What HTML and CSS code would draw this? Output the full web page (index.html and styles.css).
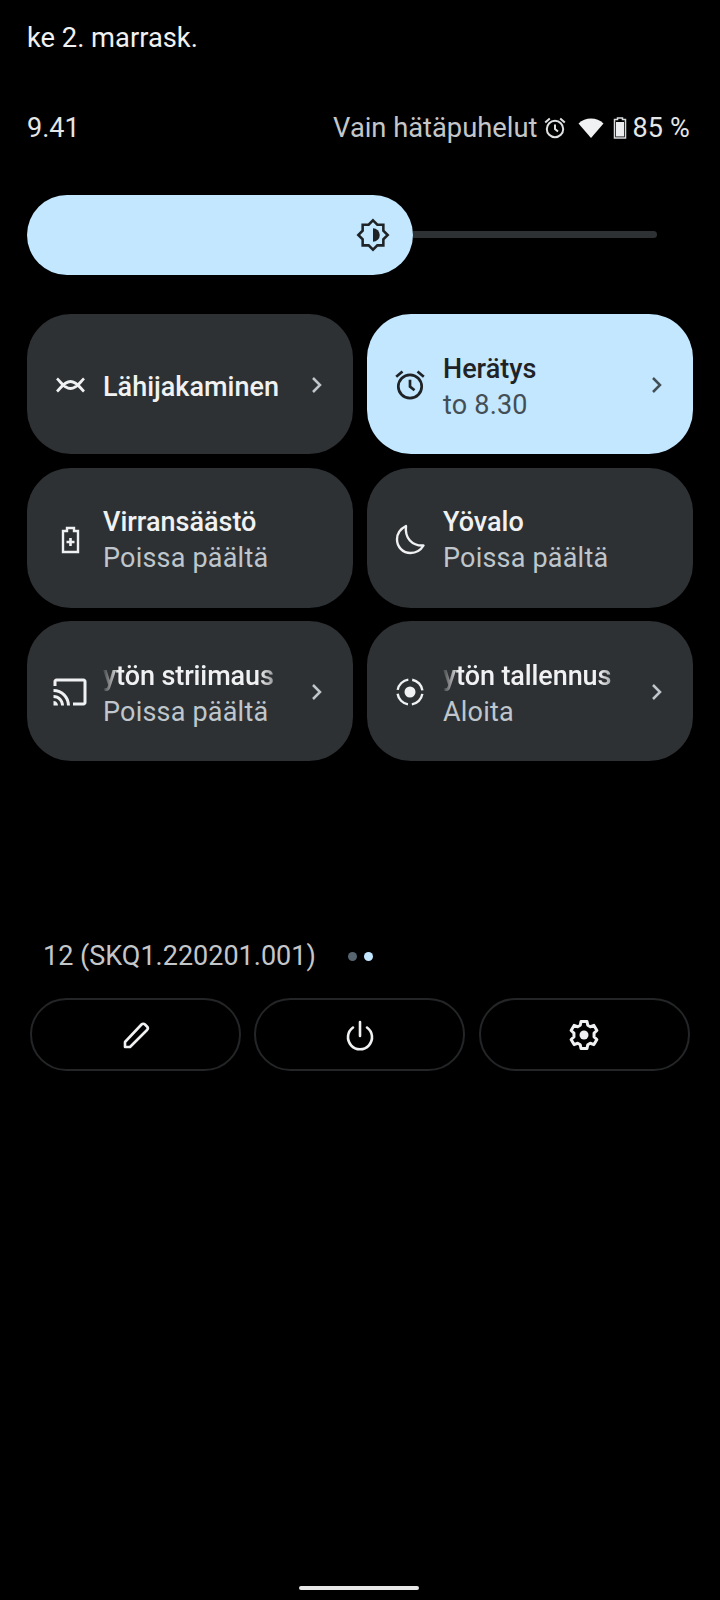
FILE: index.html
```html
<!DOCTYPE html>
<html>
	<head>
		<meta charset="utf-8">
		<title>Pika-asetukset</title>
		<link rel="stylesheet" href="styles.css">
	</head>
	<body>
		<div class="date">ke 2. marrask.</div>

		<div class="status">
			<span class="time">9.41</span>
			<div class="status-right">
				<span class="carrier">Vain hätäpuhelut</span>
				<svg class="st-alarm" width="24" height="24" viewBox="0 0 24 24" fill="none" stroke="#dfe1e3" stroke-width="2"><circle cx="12" cy="13" r="8.200"/><path d="M12 8.500V13l3 2.500M2.200 6.500L6.800 2.500M21.800 6.500L17.200 2.500"/></svg>
				<svg class="st-wifi" width="26" height="20" viewBox="0 0 26 20"><path d="M13 20L.5 5.500C4 2.200 8.200.5 13 .5s9 1.700 12.500 5z" fill="#f0f1f2"/></svg>
				<svg class="st-batt" width="14" height="22" viewBox="0 0 14 22"><path d="M4.500 1v1.500H1.500v18.500h11V2.500H9.500V1z" fill="none" stroke="#d8dadc" stroke-width="1.500"/><rect x="3" y="5" width="8" height="14.500" fill="#eceef0"/></svg>
				<span class="batt">85 %</span>
			</div>
		</div>

		<div class="slider">
			<div class="thumb">
				<svg width="36" height="36" viewBox="0 0 24 24"><path d="M12 2.200l2.900 2.900h4v4L21.800 12l-2.900 2.900v4h-4L12 21.800l-2.900-2.900h-4v-4L2.200 12l2.900-2.900v-4h4z" fill="none" stroke="#1f2326" stroke-width="1.700"/><path d="M12 7.500v9a4.500 4.500 0 0 1 0-9z" fill="#1f2326" transform="matrix(-1 0 0 1 24 0)"/></svg>
			</div>
			<div class="track"></div>
		</div>

		<div class="tiles">
			<div class="tile">
				<svg class="tile-icon" width="36" height="36" viewBox="0 0 36 36" fill="none" stroke="#f0f1f2" stroke-width="2.800"><path d="M5 24.500C9 21 12 14.500 18.500 14.500S28 21 32 24.500M5 11.500C9 15 12 21.500 18.500 21.500S28 15 32 11.500"/></svg>
				<div class="tile-text"><div class="title">Lähijakaminen</div></div>
				<svg class="chev" width="14" height="20" viewBox="0 0 14 20"><path d="M3 3l7 7-7 7" fill="none" stroke="#bfc6cc" stroke-width="2.500"/></svg>
			</div>
			<div class="tile on">
				<svg class="tile-icon" width="36" height="36" viewBox="0 0 24 24" fill="none" stroke="#1f2326" stroke-width="1.800"><circle cx="12" cy="13" r="7.800"/><path d="M12 8.500V13l3 2.500M2.800 6.500L7 3M21.200 6.500L17 3"/></svg>
				<div class="tile-text"><div class="title">Herätys</div><div class="sub">to 8.30</div></div>
				<svg class="chev" width="14" height="20" viewBox="0 0 14 20"><path d="M3 3l7 7-7 7" fill="none" stroke="#444e55" stroke-width="2.500"/></svg>
			</div>
			<div class="tile">
				<svg class="tile-icon" width="36" height="36" viewBox="0 0 36 36"><path d="M15 7h7v3h4v21H11V10h4z" fill="none" stroke="#f0f1f2" stroke-width="2.400"/><path d="M18.500 17v8M14.500 21h8" stroke="#f0f1f2" stroke-width="2.600"/></svg>
				<div class="tile-text"><div class="title">Virransäästö</div><div class="sub">Poissa päältä</div></div>
			</div>
			<div class="tile">
				<svg class="tile-icon" width="36" height="36" viewBox="0 0 36 36"><path d="M14 5C8 8 5 13 5 18.500 5 26 11 32 18.500 32c5.500 0 10-2.500 13-7.500C20 25 12.500 17 14 5z" fill="none" stroke="#f0f1f2" stroke-width="2.400" stroke-linejoin="round"/></svg>
				<div class="tile-text"><div class="title">Yövalo</div><div class="sub">Poissa päältä</div></div>
			</div>
			<div class="tile">
				<svg class="tile-icon" width="36" height="36" viewBox="0 0 24 24" fill="#f0f1f2"><path d="M21 3H3c-1.100 0-2 .9-2 2v3h2V5h18v14h-7v2h7c1.100 0 2-.9 2-2V5c0-1.100-.9-2-2-2zM1 18v3h3c0-1.660-1.340-3-3-3zm0-4v2c2.760 0 5 2.240 5 5h2c0-3.870-3.130-7-7-7zm0-4v2c4.970 0 9 4.030 9 9h2c0-6.080-4.930-11-11-11z"/></svg>
				<div class="tile-text"><div class="title fade">ytön striimaus</div><div class="sub">Poissa päältä</div></div>
				<svg class="chev" width="14" height="20" viewBox="0 0 14 20"><path d="M3 3l7 7-7 7" fill="none" stroke="#bfc6cc" stroke-width="2.500"/></svg>
			</div>
			<div class="tile">
				<svg class="tile-icon" width="36" height="36" viewBox="0 0 36 36" fill="none" stroke="#f0f1f2" stroke-width="2.400"><circle cx="18" cy="18" r="5.500" fill="#f0f1f2" stroke="none"/><circle cx="18" cy="18" r="12.500" stroke-dasharray="15.600 4" stroke-dashoffset="-2"/></svg>
				<div class="tile-text"><div class="title fade">ytön tallennus</div><div class="sub">Aloita</div></div>
				<svg class="chev" width="14" height="20" viewBox="0 0 14 20"><path d="M3 3l7 7-7 7" fill="none" stroke="#bfc6cc" stroke-width="2.500"/></svg>
			</div>
		</div>

		<div class="build-row">
			<span class="build">12 (SKQ1.220201.001)</span>
			<span class="dot"></span>
			<span class="dot active"></span>
		</div>

		<div class="buttons">
			<div class="btn">
				<svg width="36" height="36" viewBox="0 0 36 36" fill="none" stroke="#f0f1f2" stroke-width="2.600" stroke-linejoin="round"><path d="M7 30v-5L23.500 7.500c1-1 2.500-1 3.500 0l2 2c1 1 1 2.500 0 3.500L12 30z"/></svg>
			</div>
			<div class="btn">
				<svg width="36" height="36" viewBox="0 0 36 36" fill="none" stroke="#f0f1f2" stroke-width="2.600" stroke-linecap="round"><path d="M18 5v14M11 10.500a12 12 0 1 0 14 0"/></svg>
			</div>
			<div class="btn">
				<svg width="36" height="36" viewBox="0 0 24 24" fill="none" stroke="#f0f1f2" stroke-width="2" stroke-linejoin="round"><path d="M10 3h4l.5 2.500 1.700 1 2.400-.9 2 3.400-1.900 1.700v2.600l1.900 1.700-2 3.400-2.400-.9-1.700 1L14 21h-4l-.5-2.500-1.700-1-2.400.9-2-3.400 1.900-1.700v-2.600L3.400 9l2-3.400 2.400.9 1.700-1z"/><circle cx="12" cy="12" r="3" fill="#f0f1f2" stroke="none"/></svg>
			</div>
		</div>

		<div class="nav-handle"></div>
	</body>
</html>
```

FILE: styles.css
```css
*{
	margin: 0;
	padding: 0;
	box-sizing: border-box;
}
html, body{
	height: 1600px;
	background: #000;
	overflow: hidden;
}
body{
	font-family: Roboto, "Liberation Sans", sans-serif;
	color: #f0f1f2;
	padding: 0 27px;
	display: flex;
	flex-direction: column;
}
.date{
	font-size: 27.300px;
	line-height: 32px;
	margin-top: 22px;
}
.status{
	display: flex;
	justify-content: space-between;
	align-items: center;
	height: 32px;
	margin-top: 58px;
	padding-right: 3px;
	font-size: 27px;
}
.time{
	color: #e4e6e8;
}
.status-right{
	display: flex;
	align-items: center;
}
.carrier{
	color: #c4c7ca;
	font-size: 27.300px;
	margin-right: 6px;
}
.st-wifi{
	margin-left: 11px;
}
.st-batt{
	margin-left: 9px;
}
.batt{
	color: #e4e6e8;
	margin-left: 5px;
	letter-spacing: .2px;
}
.slider{
	display: flex;
	align-items: center;
	margin-top: 51px;
}
.thumb{
	width: 386px;
	height: 80px;
	border-radius: 40px;
	background: #c2e7ff;
	display: flex;
	align-items: center;
	justify-content: flex-end;
	padding-right: 22px;
}
.track{
	width: 244px;
	height: 7px;
	margin-bottom: 2px;
	border-radius: 0 4px 4px 0;
	background: #2e3133;
}
.tiles{
	display: grid;
	grid-template-columns: 326px 326px;
	grid-auto-rows: 140px;
	gap: 13.500px 14px;
	margin-top: 39px;
}
.tile{
	border-radius: 44px;
	background: #2e3133;
	display: flex;
	align-items: center;
	padding: 0 29px 0 25px;
}
.tile.on{
	background: #c2e7ff;
	color: #1f2326;
}
.tile-icon{
	flex: none;
	margin: 2px 15px 0 0;
}
.tile-text{
	flex: 1;
	min-width: 0;
	padding-top: 5px;
}
.title{
	font-size: 27px;
	font-weight: 500;
	line-height: 36px;
}
.sub{
	font-size: 27px;
	line-height: 36px;
	color: #bfc6cc;
	letter-spacing: .2px;
}
.tile.on .sub{
	color: #444e55;
}
.fade{
	width: 172px;
	letter-spacing: -.1px;
	white-space: nowrap;
	overflow: hidden;
	-webkit-mask-image: linear-gradient(to right, rgba(0,0,0,.1) 0, #000 16px, #000 156px, rgba(0,0,0,.5) 172px);
	mask-image: linear-gradient(to right, rgba(0,0,0,.1) 0, #000 16px, #000 156px, rgba(0,0,0,.5) 172px);
}
.chev{
	flex: none;
	margin-top: 2px;
}
.build-row{
	display: flex;
	align-items: center;
	margin-top: 179px;
	padding-left: 16px;
	height: 32px;
}
.build{
	font-size: 27px;
	color: #c4c7ca;
	margin-right: 32px;
}
.dot{
	width: 9px;
	height: 9px;
	border-radius: 50%;
	background: #566570;
	margin-right: 7px;
}
.dot.active{
	background: #c2e7ff;
}
.buttons{
	display: flex;
	gap: 13.400px;
	margin-top: 26px;
	padding-left: 3px;
}
.btn{
	width: 211px;
	height: 73px;
	border: 2px solid #232527;
	border-radius: 37px;
	display: flex;
	align-items: center;
	justify-content: center;
}
.nav-handle{
	width: 120px;
	height: 4px;
	border-radius: 2px;
	background: #e8e8e8;
	margin: 515px auto 0;
	position: relative;
	left: -1px;
}
```
